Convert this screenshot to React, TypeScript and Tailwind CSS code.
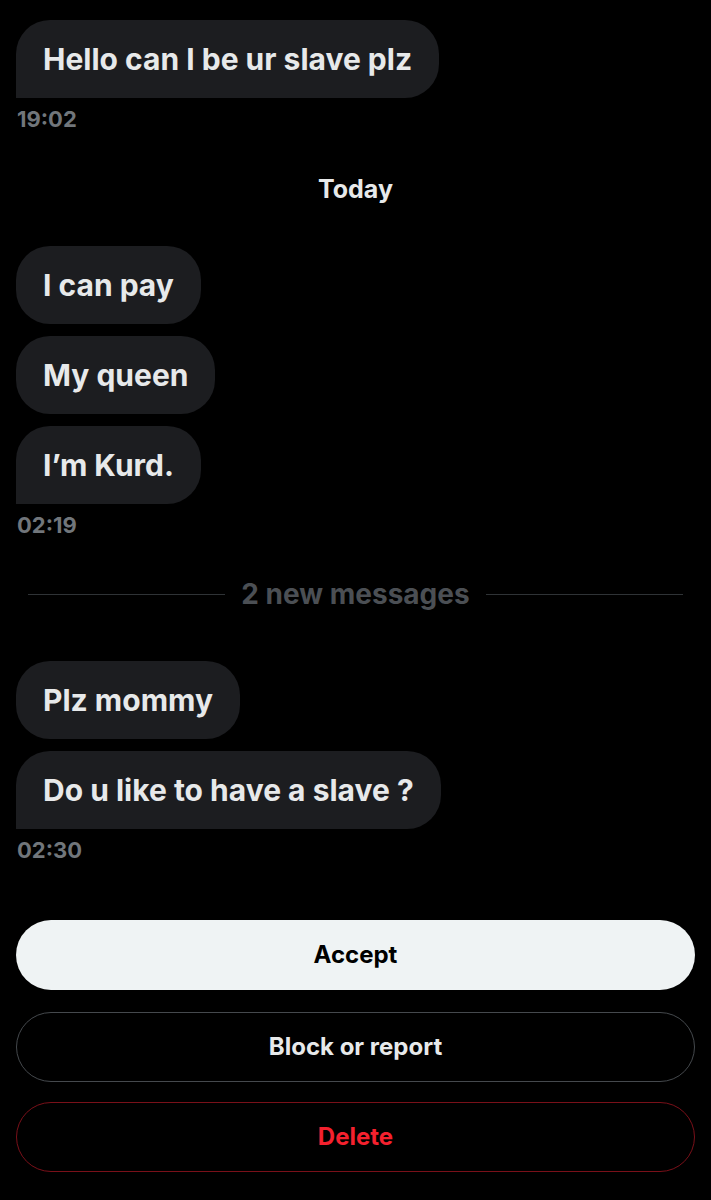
import React from "react";

type Message = {
  text: string;
  last?: boolean;
};

function Bubble({ text, last }: Message) {
  return (
    <div
      className={`w-fit rounded-[34px] bg-[#1c1d20] px-[27px] py-[22px] text-[30px] font-bold leading-[34px] text-[#e7e9ea] ${
        last ? "rounded-bl-none" : ""
      }`}
    >
      {text}
    </div>
  );
}

function Group({ messages, time }: { messages: string[]; time: string }) {
  return (
    <div className="flex flex-col">
      <div className="flex flex-col gap-[12px]">
        {messages.map((m, i) => (
          <Bubble key={m} text={m} last={i === messages.length - 1} />
        ))}
      </div>
      <div className="mt-[7px] pl-[1px] text-[22px] font-bold leading-[28px] text-[#71767b]">
        {time}
      </div>
    </div>
  );
}

export default function App() {
  return (
    <div
      className="min-h-[1200px] w-full bg-black px-4 pt-5"
      style={{ fontFamily: "Inter, 'Liberation Sans', sans-serif" }}
    >
      <Group messages={["Hello can I be ur slave plz"]} time="19:02" />

      <div className="mt-[41px] text-center text-[25px] font-bold leading-[30px] text-[#e7e9ea]">
        Today
      </div>

      <div className="mt-[42px]">
        <Group messages={["I can pay", "My queen", "I’m Kurd."]} time="02:19" />
      </div>

      <div className="mt-[38px] flex items-center gap-4 px-3">
        <div className="h-px flex-1 bg-[#2f3336]" />
        <div className="text-[28px] font-bold leading-[34px] text-[#4b4f54]">
          2 new messages
        </div>
        <div className="h-px flex-1 bg-[#2f3336]" />
      </div>

      <div className="mt-[50px]">
        <Group messages={["Plz mommy", "Do u like to have a slave ?"]} time="02:30" />
      </div>

      <div className="mt-[56px] flex flex-col">
        <button className="flex h-[70px] items-center justify-center rounded-full bg-[#eff3f4] text-[24px] font-bold text-black">
          Accept
        </button>
        <button className="mt-[22px] flex h-[70px] items-center justify-center rounded-full border border-[#45494d] text-[24px] font-bold text-[#e7e9ea]">
          Block or report
        </button>
        <button className="mt-[20px] flex h-[70px] items-center justify-center rounded-full border border-[#7a1019] text-[24px] font-bold text-[#f4212e]">
          Delete
        </button>
      </div>
    </div>
  );
}
